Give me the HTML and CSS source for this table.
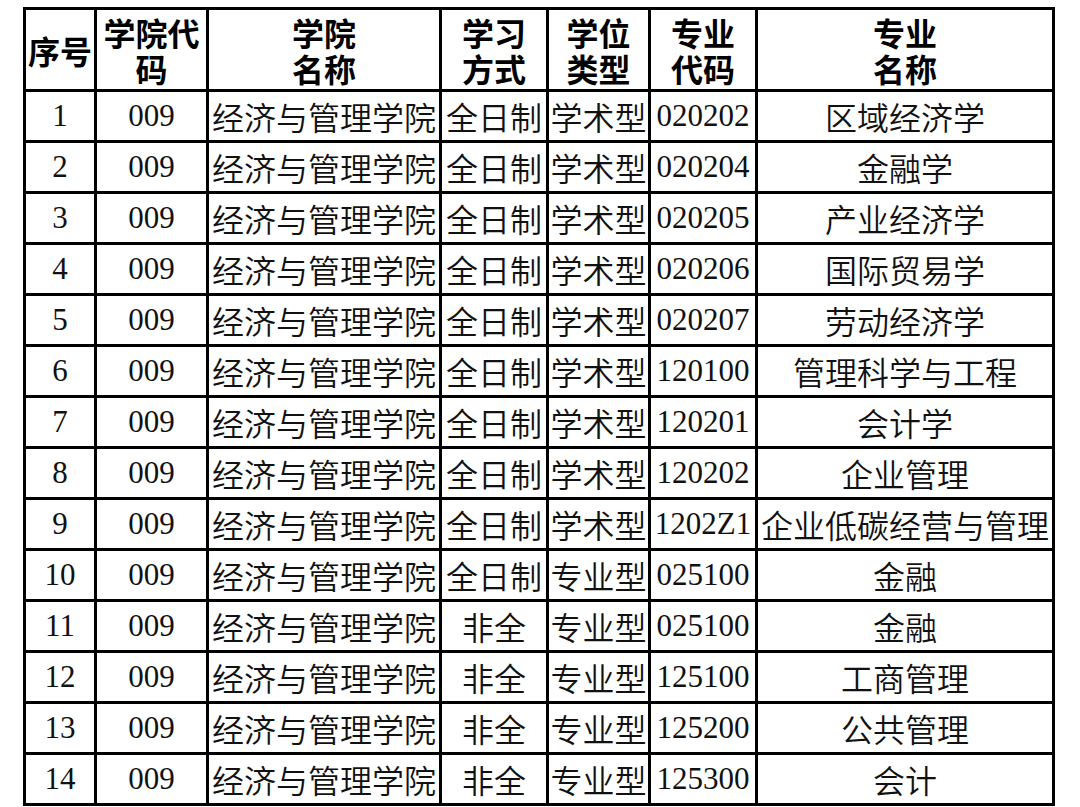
FILE: index.html
```html
<!DOCTYPE html>
<html lang="zh">
<head>
<meta charset="utf-8">
<link rel="stylesheet" href="styles.css">
</head>
<body>
<table class="tbl">
  <colgroup>
    <col class="c1"><col class="c2"><col class="c3"><col class="c4"><col class="c5"><col class="c6"><col class="c7">
  </colgroup>
  <thead>
    <tr>
      <th>序号</th>
      <th><span class="ln">学院代</span><span class="ln">码</span></th>
      <th><span class="ln">学院</span><span class="ln">名称</span></th>
      <th><span class="ln">学习</span><span class="ln">方式</span></th>
      <th><span class="ln">学位</span><span class="ln">类型</span></th>
      <th><span class="ln">专业</span><span class="ln">代码</span></th>
      <th><span class="ln">专业</span><span class="ln">名称</span></th>
    </tr>
  </thead>
  <tbody>
    <tr><td class="num">1</td><td class="num">009</td><td>经济与管理学院</td><td>全日制</td><td>学术型</td><td class="num">020202</td><td>区域经济学</td></tr>
    <tr><td class="num">2</td><td class="num">009</td><td>经济与管理学院</td><td>全日制</td><td>学术型</td><td class="num">020204</td><td>金融学</td></tr>
    <tr><td class="num">3</td><td class="num">009</td><td>经济与管理学院</td><td>全日制</td><td>学术型</td><td class="num">020205</td><td>产业经济学</td></tr>
    <tr><td class="num">4</td><td class="num">009</td><td>经济与管理学院</td><td>全日制</td><td>学术型</td><td class="num">020206</td><td>国际贸易学</td></tr>
    <tr><td class="num">5</td><td class="num">009</td><td>经济与管理学院</td><td>全日制</td><td>学术型</td><td class="num">020207</td><td>劳动经济学</td></tr>
    <tr><td class="num">6</td><td class="num">009</td><td>经济与管理学院</td><td>全日制</td><td>学术型</td><td class="num">120100</td><td>管理科学与工程</td></tr>
    <tr><td class="num">7</td><td class="num">009</td><td>经济与管理学院</td><td>全日制</td><td>学术型</td><td class="num">120201</td><td>会计学</td></tr>
    <tr><td class="num">8</td><td class="num">009</td><td>经济与管理学院</td><td>全日制</td><td>学术型</td><td class="num">120202</td><td>企业管理</td></tr>
    <tr><td class="num">9</td><td class="num">009</td><td>经济与管理学院</td><td>全日制</td><td>学术型</td><td class="num">1202Z1</td><td>企业低碳经营与管理</td></tr>
    <tr><td class="num">10</td><td class="num">009</td><td>经济与管理学院</td><td>全日制</td><td>专业型</td><td class="num">025100</td><td>金融</td></tr>
    <tr><td class="num">11</td><td class="num">009</td><td>经济与管理学院</td><td>非全</td><td>专业型</td><td class="num">025100</td><td>金融</td></tr>
    <tr><td class="num">12</td><td class="num">009</td><td>经济与管理学院</td><td>非全</td><td>专业型</td><td class="num">125100</td><td>工商管理</td></tr>
    <tr><td class="num">13</td><td class="num">009</td><td>经济与管理学院</td><td>非全</td><td>专业型</td><td class="num">125200</td><td>公共管理</td></tr>
    <tr><td class="num">14</td><td class="num">009</td><td>经济与管理学院</td><td>非全</td><td>专业型</td><td class="num">125300</td><td>会计</td></tr>
  </tbody>
</table>
</body>
</html>
```
FILE: styles.css
```css
html, body {
  margin: 0;
  padding: 0;
  background: #fff;
}
body {
  padding: 7px 0 0 23px;
  font-family: "Noto Sans CJK SC", "Noto Sans", sans-serif;
  color: #111;
}
.tbl {
  border-collapse: collapse;
  table-layout: fixed;
  width: 1032px;
}
.c1 { width: 71px; }
.c2 { width: 112px; }
.c3 { width: 233px; }
.c4 { width: 107px; }
.c5 { width: 102px; }
.c6 { width: 107px; }
.c7 { width: 297px; }
.tbl th, .tbl td {
  border: 3px solid #000;
  padding: 0;
  text-align: center;
  vertical-align: middle;
  white-space: nowrap;
  overflow: visible;
}
.tbl th {
  height: 79px;
  font-size: 32px;
  font-weight: 700;
  line-height: 36px;
  color: #000;
}
.tbl th .ln {
  display: block;
  height: 36px;
  line-height: 36px;
}
.tbl td {
  height: 48px;
  font-size: 32px;
  font-weight: 350;
  line-height: 40px;
}
.tbl td.num {
  font-family: "Liberation Serif", "Times New Roman", serif;
  font-size: 31px;
  font-weight: 400;
}
```
